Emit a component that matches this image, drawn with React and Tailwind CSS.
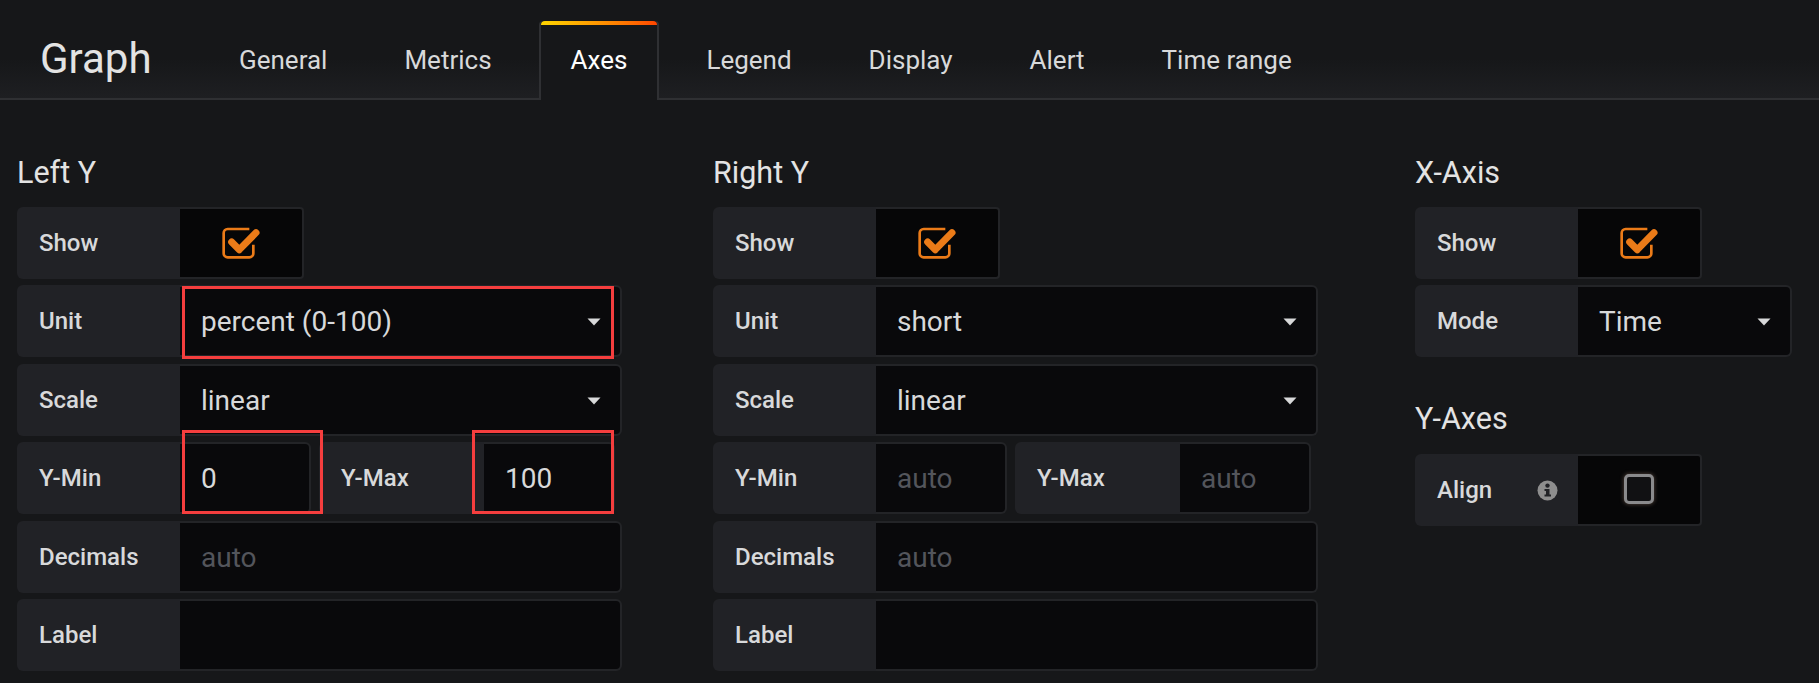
import React from 'react';

const tabs = ['General', 'Metrics', 'Axes', 'Legend', 'Display', 'Alert', 'Time range'];

const Caret = () => (
  <svg width="14" height="8" viewBox="0 0 14 8" className="shrink-0">
    <path d="M0.5 0.5H13.5L7 7.5Z" fill="#d8d9da" />
  </svg>
);

const CheckIcon = () => (
  <svg width="40" height="35" viewBox="185 70 120 105">
    <path d="M270 79H205a12 12 0 0 0-12 12V152a12 12 0 0 0 12 12H270a12 12 0 0 0 12-12V126" fill="none" stroke="#eb7b18" strokeWidth="8" />
    <path d="M217 118L240 141L290 90" fill="none" stroke="#eb7b18" strokeWidth="21" strokeLinecap="round" strokeLinejoin="round" />
  </svg>
);

const Label = ({ children, w = 'w-[163px]' }) => (
  <div className={`${w} shrink-0 h-full flex items-center pl-[22px] bg-[#212226] rounded-l-[6px] text-[24px] font-medium text-[#d8d9da]`}>
    {children}
  </div>
);

const Field = ({ children, className = '' }) => (
  <div className={`h-full flex items-center pl-[21px] pr-[19px] pt-[2px] bg-[#09090b] border-2 border-[#232427] border-l-0 rounded-r-[6px] text-[28px] text-[#d8d9da] ${className}`}>
    {children}
  </div>
);

const Toggle = ({ label, children }) => (
  <div className="h-[72px] flex">
    <Label>{label}</Label>
    <div className="w-[124px] h-full flex items-center justify-center bg-[#060607] border-2 border-[#232427] border-l-0 rounded-r-[4px]">
      {children}
    </div>
  </div>
);

const Select = ({ label, value, width = 'w-[605px]' }) => (
  <div className={`${width} h-[72px] flex`}>
    <Label>{label}</Label>
    <Field className="flex-1 justify-between">
      <span>{value}</span>
      <Caret />
    </Field>
  </div>
);

const TextRow = ({ label, placeholder }) => (
  <div className="w-[605px] h-[72px] flex">
    <Label>{label}</Label>
    <Field className="flex-1">
      <span className="text-[#53555b]">{placeholder}</span>
    </Field>
  </div>
);

const MinMax = ({ min, max, muted }) => (
  <div className="h-[72px] flex gap-[8px]">
    <div className="w-[294px] flex h-full">
      <Label>Y-Min</Label>
      <Field className="flex-1">
        <span className={muted ? 'text-[#53555b]' : ''}>{min}</span>
      </Field>
    </div>
    <div className="w-[296px] flex h-full">
      <Label w="w-[165px]">Y-Max</Label>
      <Field className="flex-1">
        <span className={muted ? 'text-[#53555b]' : ''}>{max}</span>
      </Field>
    </div>
  </div>
);

const Heading = ({ children, className = '' }) => (
  <h2 className={`h-[34px] leading-[34px] text-[30.5px] text-[#e3e3e3] ${className}`}>{children}</h2>
);

const AxisColumn = ({ title, unit, min, max, muted }) => (
  <div className="w-[605px] shrink-0">
    <Heading className="mb-[17px]">{title}</Heading>
    <div className="flex flex-col gap-[6.4px]">
      <Toggle label="Show"><CheckIcon /></Toggle>
      <Select label="Unit" value={unit} />
      <Select label="Scale" value="linear" />
      <MinMax min={min} max={max} muted={muted} />
      <TextRow label="Decimals" placeholder="auto" />
      <TextRow label="Label" placeholder="" />
    </div>
  </div>
);

const Callout = ({ className }) => (
  <div className={`absolute border-[3px] border-[#f53e3e] pointer-events-none ${className}`} />
);

export default function App() {
  return (
    <div className="relative w-[1819px] h-[683px] overflow-hidden bg-[#161719] text-[#d8d9da] font-['Roboto',sans-serif]">
      <header className="relative h-[100px] pl-[40px] flex items-end bg-gradient-to-b from-[#161719] from-60% to-[#1e1f22] border-b-2 border-[#2f3033]">
        <div className="h-[79px] w-[169px] flex items-center text-[42px] text-[#e3e3e3] shrink-0">Graph</div>
        <nav className="flex gap-[17px] h-[79px] -mb-[2px]">
          {tabs.map(t => (
            t === 'Axes' ? (
              <div key={t} className="relative h-[79px] px-[30px] flex items-center text-[26px] text-white bg-[#161719] border-x-2 border-[#2f3033] rounded-t-[4px]">
                <div className="absolute left-0 right-0 top-0 h-[4px] rounded-t-[4px] bg-gradient-to-r from-[#ffd500] to-[#ff4400]" />
                {t}
              </div>
            ) : (
              <div key={t} className="h-[79px] px-[30px] flex items-center text-[26px] text-[#d8d9da]">{t}</div>
            )
          ))}
        </nav>
      </header>

      <main className="flex pl-[17px] pt-[56px]">
        <AxisColumn title="Left Y" unit="percent (0-100)" min="0" max="100" />
        <div className="ml-[91px]">
          <AxisColumn title="Right Y" unit="short" min="auto" max="auto" muted />
        </div>
        <div className="ml-[97px] w-[377px] shrink-0">
          <Heading className="mb-[17px]">X-Axis</Heading>
          <div className="flex flex-col gap-[6.4px]">
            <Toggle label="Show"><CheckIcon /></Toggle>
            <Select label="Mode" value="Time" width="w-[377px]" />
          </div>
          <Heading className="mt-[45px] mb-[18px]">Y-Axes</Heading>
          <div className="h-[72px] flex">
            <Label>
              <span className="flex-1">Align</span>
              <svg width="21" height="21" viewBox="0 0 21 21" className="mr-[20px]">
                <circle cx="10.5" cy="10.5" r="10" fill="#8e8e8e" />
                <circle cx="10.5" cy="5.6" r="2.2" fill="#212226" />
                <path d="M7.5 9H12.5V14.5H14V16.5H7.5V14.5H9V11H7.5Z" fill="#212226" />
              </svg>
            </Label>
            <div className="w-[124px] h-full flex items-center justify-center bg-[#060607] border-2 border-[#232427] border-l-0 rounded-r-[4px]">
              <div className="w-[30px] h-[30px] -mt-[2px] rounded-[5px] border-[3px] border-[#8a8a8c] bg-[#111113] shadow-[0_0_4px_#5a4a40]" />
            </div>
          </div>
        </div>
      </main>

      <Callout className="left-[182px] top-[286px] w-[432px] h-[73px]" />
      <Callout className="left-[182px] top-[430px] w-[141px] h-[84px]" />
      <Callout className="left-[472px] top-[430px] w-[142px] h-[84px]" />
    </div>
  );
}
